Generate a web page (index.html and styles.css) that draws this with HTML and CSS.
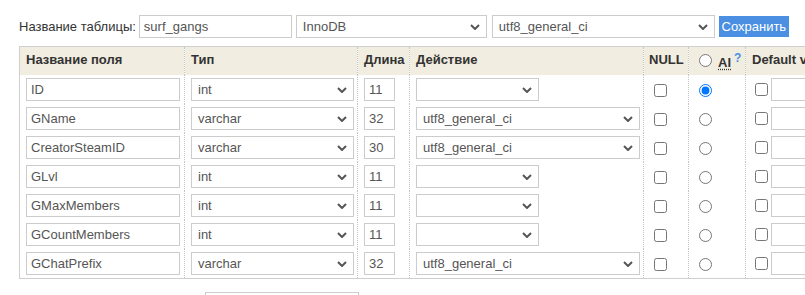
FILE: index.html
```html
<!DOCTYPE html>
<html lang="ru">
<head>
<meta charset="utf-8">
<title>Изменить таблицу: surf_gangs</title>
<link rel="stylesheet" href="styles.css">
</head>
<body>
<div class="page">
  <div class="toolbar">
    <label class="tlabel" for="tname">Название таблицы:</label>
    <input id="tname" class="inp w-name" value="surf_gangs">
    <select class="sel w-engine"><option>InnoDB</option></select>
    <select class="sel w-coll"><option>utf8_general_ci</option></select>
    <button class="save">Сохранить</button>
  </div>
  <table class="fields">
    <colgroup>
      <col class="c1"><col class="c2"><col class="c3"><col class="c4"><col class="c5"><col class="c6"><col class="c7">
    </colgroup>
    <thead>
      <tr>
        <th>Название поля</th>
        <th>Тип</th>
        <th>Длина</th>
        <th>Действие</th>
        <th class="th-null">NULL</th>
        <th class="th-ai"><input type="radio" name="ai" class="rad hrad"><abbr class="ai">AI</abbr><sup class="help">?</sup></th>
        <th>Default values</th>
      </tr>
    </thead>
    <tbody>
      <tr>
        <td><input class="inp w-field" value="ID"></td>
        <td><select class="sel w-type"><option>int</option></select></td>
        <td><input class="inp w-len" value="11"></td>
        <td><select class="sel w-act"><option></option></select></td>
        <td class="ctr"><input type="checkbox" class="chk"></td>
        <td class="ctr"><input type="radio" name="ai" class="rad" checked></td>
        <td class="def"><input type="checkbox" class="chk"><input class="inp w-def"></td>
      </tr>
      <tr>
        <td><input class="inp w-field" value="GName"></td>
        <td><select class="sel w-type"><option>varchar</option></select></td>
        <td><input class="inp w-len" value="32"></td>
        <td><select class="sel w-coll2"><option>utf8_general_ci</option></select></td>
        <td class="ctr"><input type="checkbox" class="chk"></td>
        <td class="ctr"><input type="radio" name="ai" class="rad"></td>
        <td class="def"><input type="checkbox" class="chk"><input class="inp w-def"></td>
      </tr>
      <tr>
        <td><input class="inp w-field" value="CreatorSteamID"></td>
        <td><select class="sel w-type"><option>varchar</option></select></td>
        <td><input class="inp w-len" value="30"></td>
        <td><select class="sel w-coll2"><option>utf8_general_ci</option></select></td>
        <td class="ctr"><input type="checkbox" class="chk"></td>
        <td class="ctr"><input type="radio" name="ai" class="rad"></td>
        <td class="def"><input type="checkbox" class="chk"><input class="inp w-def"></td>
      </tr>
      <tr>
        <td><input class="inp w-field" value="GLvl"></td>
        <td><select class="sel w-type"><option>int</option></select></td>
        <td><input class="inp w-len" value="11"></td>
        <td><select class="sel w-act"><option></option></select></td>
        <td class="ctr"><input type="checkbox" class="chk"></td>
        <td class="ctr"><input type="radio" name="ai" class="rad"></td>
        <td class="def"><input type="checkbox" class="chk"><input class="inp w-def"></td>
      </tr>
      <tr>
        <td><input class="inp w-field" value="GMaxMembers"></td>
        <td><select class="sel w-type"><option>int</option></select></td>
        <td><input class="inp w-len" value="11"></td>
        <td><select class="sel w-act"><option></option></select></td>
        <td class="ctr"><input type="checkbox" class="chk"></td>
        <td class="ctr"><input type="radio" name="ai" class="rad"></td>
        <td class="def"><input type="checkbox" class="chk"><input class="inp w-def"></td>
      </tr>
      <tr>
        <td><input class="inp w-field" value="GCountMembers"></td>
        <td><select class="sel w-type"><option>int</option></select></td>
        <td><input class="inp w-len" value="11"></td>
        <td><select class="sel w-act"><option></option></select></td>
        <td class="ctr"><input type="checkbox" class="chk"></td>
        <td class="ctr"><input type="radio" name="ai" class="rad"></td>
        <td class="def"><input type="checkbox" class="chk"><input class="inp w-def"></td>
      </tr>
      <tr>
        <td><input class="inp w-field" value="GChatPrefix"></td>
        <td><select class="sel w-type"><option>varchar</option></select></td>
        <td><input class="inp w-len" value="32"></td>
        <td><select class="sel w-coll2"><option>utf8_general_ci</option></select></td>
        <td class="ctr"><input type="checkbox" class="chk"></td>
        <td class="ctr"><input type="radio" name="ai" class="rad"></td>
        <td class="def"><input type="checkbox" class="chk"><input class="inp w-def"></td>
      </tr>
    </tbody>
  </table>
  <div class="below"><div class="below-box"></div></div>
</div>
</body>
</html>
```

FILE: styles.css
```css
html, body {
  margin: 0;
  padding: 0;
  background: #fff;
  overflow: hidden;
}
body {
  font-family: "Liberation Sans", Arial, sans-serif;
  font-size: 13px;
  color: #333;
}
.page {
  padding: 15px 0 0 19px;
  width: 1000px;
}
.toolbar {
  display: flex;
  align-items: center;
  height: 23px;
}
.tlabel {
  margin-right: 3px;
}
.inp, .sel {
  box-sizing: border-box;
  height: 23px;
  border: 1px solid #ccc;
  border-radius: 0;
  background-color: #fff;
  font-family: "Liberation Sans", Arial, sans-serif;
  font-size: 13px;
  color: #555;
  margin: 0;
  outline: none;
}
.inp {
  padding: 0 4px;
}
.sel {
  -webkit-appearance: none;
  appearance: none;
  padding: 0 20px 0 6px;
  background-image: url("data:image/svg+xml,%3Csvg xmlns='http://www.w3.org/2000/svg' width='10' height='6' viewBox='0 0 10 6'%3E%3Cpath d='M1 1l4 4 4-4' fill='none' stroke='%23555' stroke-width='2'/%3E%3C/svg%3E");
  background-repeat: no-repeat;
  background-position: right 6px center;
  background-size: 10px 6px;
}
.w-name { width: 153px; margin-right: 4px; }
.w-engine { width: 191px; margin-right: 5px; }
.w-coll { width: 223px; margin-right: 4px; }
.save {
  box-sizing: border-box;
  height: 21px;
  width: 70px;
  padding: 0;
  border: 0;
  background: #4a8fe2;
  color: #fff;
  font-family: "Liberation Sans", Arial, sans-serif;
  font-size: 13px;
}

.fields {
  margin-top: 8px;
  border-collapse: collapse;
  table-layout: fixed;
  width: 930px;
  border: 1px solid #cfcfcf;
  border-right: 0;
}
.c1 { width: 165px; }
.c2 { width: 173px; }
.c3 { width: 52px; }
.c4 { width: 234px; }
.c5 { width: 45px; }
.c6 { width: 57px; }
.c7 { width: 204px; }
.fields th, .fields td {
  padding: 3px 5px 3px 6px;
  border-left: 1px dotted #c4c4c4;
  text-align: left;
  white-space: nowrap;
  overflow: hidden;
}
.fields th:first-child, .fields td:first-child {
  border-left: 1px solid #cfcfcf;
}
.fields thead th {
  background: #f1ede1;
  font-weight: bold;
  color: #333;
  height: 22px;
  vertical-align: top;
  padding-top: 5px;
  padding-bottom: 1px;
}
.fields td {
  height: 23px;
  vertical-align: middle;
}
.fields th.th-null { padding-left: 5px; }
.fields th.th-ai { padding-left: 10px; }
.fields th .hrad { margin: 0 6px 0 0; vertical-align: baseline; }
.ai {
  text-decoration: underline dotted;
  text-underline-offset: 2px;
  cursor: help;
}
.help {
  color: #4a8fe2;
  font-size: 12px;
  font-weight: bold;
  margin-left: 3px;
  line-height: 1;
}
.ctr { text-align: left; }
.chk, .rad {
  width: 13px;
  height: 13px;
  margin: 0;
  vertical-align: middle;
}
td .chk { margin-left: 4px; }
td .rad { margin-left: 4px; }
.def .chk { margin-left: 3px; margin-right: 3px; }
.w-field { width: 154px; }
.w-type { width: 163px; }
.w-len { width: 31px; }
.w-act { width: 123px; }
.w-coll2 { width: 224px; }
.w-def { width: 180px; vertical-align: middle; }

.below {
  padding-left: 186px;
  margin-top: 13px;
}
.below-box {
  width: 152px;
  height: 20px;
  border: 1px solid #ccc;
}
```
